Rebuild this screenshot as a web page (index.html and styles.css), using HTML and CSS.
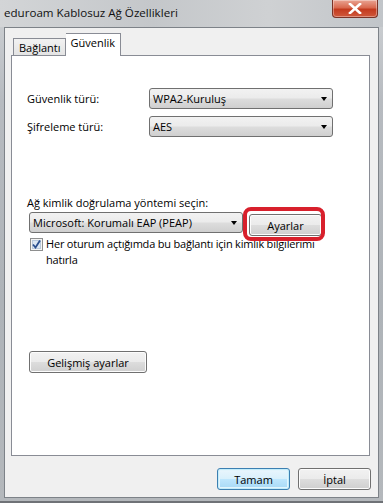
FILE: index.html
```html
<!DOCTYPE html>
<html lang="tr">
<head>
  <meta charset="UTF-8" />
  <title>eduroam Kablosuz Ağ Özellikleri</title>
  <link rel="stylesheet" href="styles.css">
</head>
<body>
  <div class="window">
    <div class="titlebar">
      <span class="title">eduroam Kablosuz Ağ Özellikleri</span>
      <div class="close">
        <svg width="14" height="11" viewBox="0 0 14 11">
          <path d="M2 1 L12 10 M12 1 L2 10" stroke="#fff" stroke-width="2.6" stroke-linecap="square"/>
        </svg>
      </div>
    </div>

    <div class="client">
      <div class="tabs">
        <div class="tab">Bağlantı</div>
        <div class="tab active">Güvenlik</div>
      </div>

      <div class="panel">
        <div class="form-grid">
          <label>Güvenlik türü:</label>
          <div class="combo wide"><span>WPA2-Kuruluş</span><i class="arrow"></i></div>
          <label>Şifreleme türü:</label>
          <div class="combo wide"><span>AES</span><i class="arrow"></i></div>
        </div>

        <div class="method-label">Ağ kimlik doğrulama yöntemi seçin:</div>
        <div class="method-row">
          <div class="combo method"><span>Microsoft: Korumalı EAP (PEAP)</span><i class="arrow"></i></div>
          <div class="highlight-wrap">
            <button class="btn settings">Ayarlar</button>
            <div class="highlight"></div>
          </div>
        </div>

        <div class="check-row">
          <svg class="checkbox" width="13" height="13" viewBox="0 0 13 13">
            <rect x="0.5" y="0.5" width="12" height="12" fill="#f4f4f4" stroke="#8e8f8f"/>
            <rect x="2.5" y="2.5" width="8" height="8" fill="#dbe6f3" stroke="#b9c9dc"/>
            <path d="M3 6.5 L5.5 9.5 L10 2.5" fill="none" stroke="#2a4f8f" stroke-width="1.8"/>
          </svg>
          <span>Her oturum açtığımda bu bağlantı için kimlik bilgilerimi hatırla</span>
        </div>

        <button class="btn advanced">Gelişmiş ayarlar</button>
      </div>

      <div class="footer">
        <button class="btn default">Tamam</button>
        <button class="btn">İptal</button>
      </div>
    </div>
  </div>
</body>
</html>
```

FILE: styles.css
```css
body {
  margin: 0;
  padding: 0;
  font-family: 'Open Sans', 'Liberation Sans', sans-serif;
  font-size: 11px;
  color: #000;
  background: #b9bdc2;
}
.window {
  width: 383px;
  height: 503px;
  display: flex;
  flex-direction: column;
  background: linear-gradient(to bottom, #cfd2d5 0%, #b7bbc0 20%, #aeb3b8 60%, #b4b8bc 100%);
  box-sizing: border-box;
  border-bottom: 2px solid #6f7277;
}
.titlebar {
  height: 27px;
  display: flex;
  justify-content: space-between;
  align-items: flex-start;
  background: linear-gradient(to right, #d3d5d7, #c4c7ca 40%, #cfd1d3 70%, #c1c5c9);
}
.title {
  padding: 5px 0 0 4px;
  font-size: 11.6px;
  color: #111;
}
.close {
  width: 44px;
  height: 17px;
  margin-right: 5px;
  border: 1px solid #7a3327;
  border-top: none;
  border-radius: 0 0 4px 4px;
  background: linear-gradient(to bottom, #e9a493 0%, #d9694f 45%, #c33a1e 55%, #d0593c 100%);
  display: flex;
  align-items: center;
  justify-content: center;
  box-shadow: inset 0 0 0 1px rgba(255,255,255,0.35);
}
.client {
  flex: 1;
  margin: 0 4px 3px 4px;
  border: 1px solid #7d8288;
  background: #f0f0f0;
  display: flex;
  flex-direction: column;
}
.tabs {
  display: flex;
  align-items: flex-end;
  height: 27px;
  padding-left: 8px;
}
.tab {
  height: 17px;
  padding: 0 4px 0 5px;
  line-height: 18px;
  border: 1px solid #898c95;
  border-bottom: none;
  background: linear-gradient(to bottom, #f2f2f2, #e3e3e3);
  margin-bottom: -1px;
}
.tab.active {
  height: 22px;
  line-height: 17px;
  padding: 0 5px 0 5px;
  background: #fff;
  border-left: none;
  position: relative;
  z-index: 1;
}
.panel {
  height: 401px;
  margin-left: 6px;
  width: 359px;
  border: 1px solid #898c95;
  background: #fff;
  box-sizing: border-box;
  padding: 32px 0 0 15px;
}
.form-grid {
  display: grid;
  grid-template-columns: 122px 184px;
  row-gap: 7px;
  align-items: center;
}
.combo {
  height: 21px;
  box-sizing: border-box;
  border: 1px solid #707070;
  border-radius: 3px;
  background: linear-gradient(to bottom, #f2f2f2 0%, #ebebeb 49%, #dddddd 51%, #cfcfcf 100%);
  display: flex;
  align-items: center;
  justify-content: space-between;
  padding: 0 5px 0 3px;
}
.arrow {
  width: 0;
  height: 0;
  border-left: 3.5px solid transparent;
  border-right: 3.5px solid transparent;
  border-top: 4px solid #000;
}
.method-label {
  margin-top: 58px;
  line-height: 16px;
}
.method-row {
  display: flex;
  align-items: flex-start;
  margin-top: 1px;
  margin-left: 2px;
}
.combo.method {
  width: 214px;
  height: 21px;
}
.btn {
  font-family: inherit;
  font-size: 11px;
  height: 22px;
  width: 73px;
  border: 1px solid #707070;
  border-radius: 3px;
  background: linear-gradient(to bottom, #f2f2f2 0%, #ebebeb 49%, #dddddd 51%, #cfcfcf 100%);
  box-shadow: inset 0 0 0 1px #fcfcfc;
  color: #000;
  padding: 0;
}
.highlight-wrap {
  position: relative;
  margin-left: 6px;
  margin-top: 2px;
}
.highlight {
  position: absolute;
  left: -6px;
  top: -7px;
  width: 82px;
  height: 34px;
  box-sizing: border-box;
  border: 4px solid #d8202c;
  border-radius: 8px;
}
.check-row {
  display: flex;
  align-items: flex-start;
  margin: 0 0 0 3px;
  width: 300px;
  line-height: 16px;
  letter-spacing: -0.2px;
}
.checkbox {
  flex: none;
  margin: 2px 3px 0 0;
}
.advanced {
  display: block;
  width: 118px;
  margin: 83px 0 0 2px;
}
.footer {
  display: flex;
  justify-content: flex-end;
  gap: 8px;
  padding: 12px 7px 0 0;
}
.btn.default {
  border-color: #3c7fb1;
  background: linear-gradient(to bottom, #eaf6fd 0%, #d9f0fc 49%, #bee6fd 51%, #a7d9f5 100%);
  box-shadow: inset 0 0 0 1px #48d1fc33, inset 0 0 0 2px #e3f4fc;
}
```
